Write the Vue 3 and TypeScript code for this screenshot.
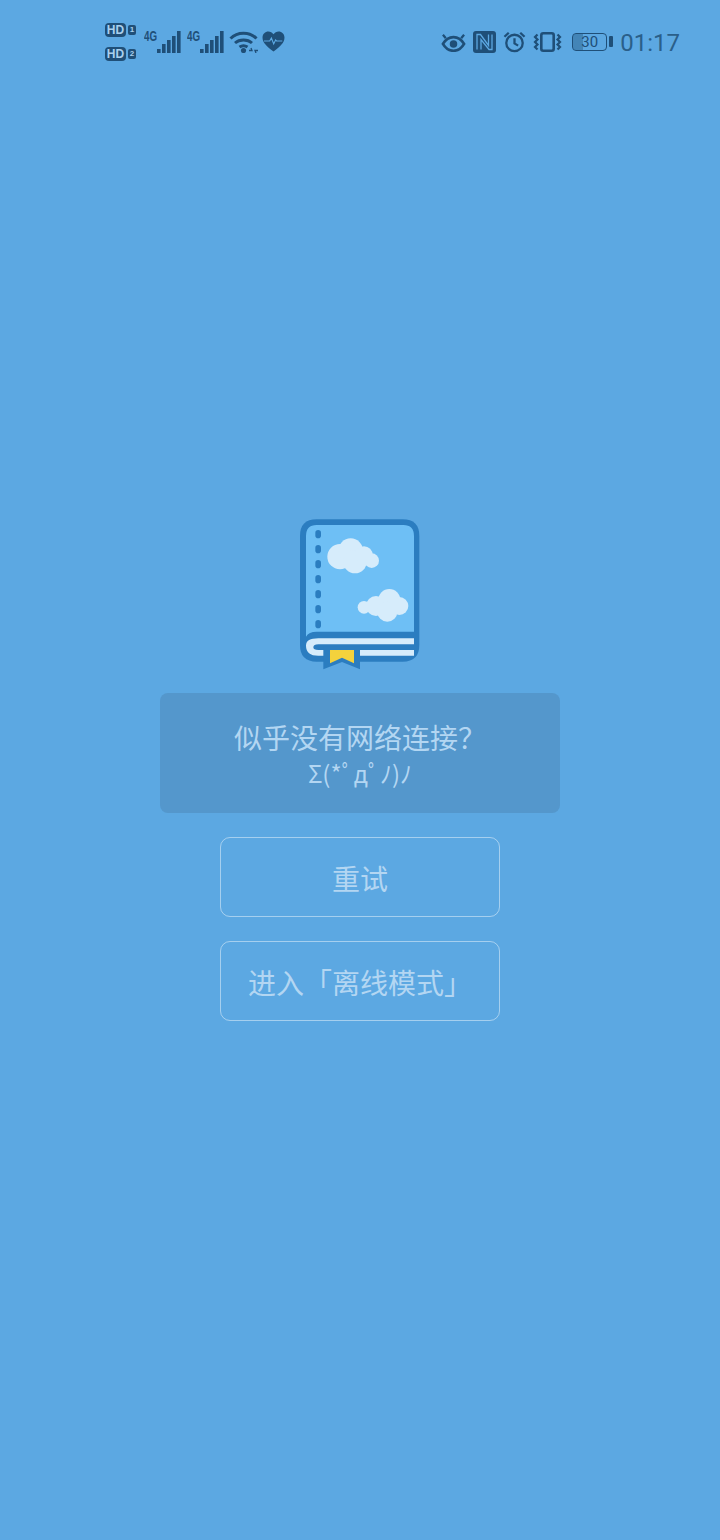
<template>
  <div class="page">
    <header class="status-bar">
      <div class="status-left">
        <div class="hd-stack">
          <div class="hd-row"><span class="hd">HD</span><span class="sim">1</span></div>
          <div class="hd-row"><span class="hd">HD</span><span class="sim">2</span></div>
        </div>
        <div v-for="n in 2" :key="n" class="signal">
          <span class="net">4G</span>
          <svg width="24" height="22" viewBox="0 0 24 22">
            <rect v-for="(h, i) in bars" :key="i" :x="i * 5" :y="22 - h" width="3.6" :height="h" fill="#1f4f78" />
          </svg>
        </div>
        <svg class="wifi" width="29" height="22" viewBox="0 0 29 22" fill="none" stroke="#1f4f78" stroke-width="3">
          <path d="M1.500 7.500C8.500 .5 20.500 .5 27.500 7.500" />
          <path d="M6 12C10.500 8 18.500 8 23 12" />
          <path d="M10.500 16C12.800 14.500 16.200 14.500 18.500 16" />
          <circle cx="14.500" cy="19.500" r="2.600" fill="#1f4f78" stroke="none" />
          <path d="M20 19.500h3l-1-2.500M29 19.500h-3l1 2.500" stroke-width="1.300" />
        </svg>
        <svg class="heart" width="25" height="21" viewBox="0 0 24 22">
          <path d="M12 21.500C5 16 .5 12.500.5 6.800.5 3 3.400.5 6.600.5 8.800.5 10.800 1.600 12 3.500 13.200 1.600 15.200.5 17.400.5 20.600.5 23.500 3 23.500 6.800 23.500 12.500 19 16 12 21.500Z" fill="#1f4f78" />
          <path d="M2 10.500h6l1.800-3 2.400 6 2-4 1 1h6" fill="none" stroke="#5ca8e2" stroke-width="1.200" />
        </svg>
      </div>
      <div class="status-right">
        <svg width="25" height="20" viewBox="0 0 26 20" fill="none" stroke="#1f4f78">
          <path d="M2 12C7.500 2.500 18.500 2.500 24 12 18.500 21.500 7.500 21.500 2 12Z" stroke-width="2.800" />
          <circle cx="13" cy="12" r="3.900" fill="#1f4f78" stroke="none" />
          <path d="M5 6 2 2.500M21 6l3-3.500" stroke-width="2.400" />
        </svg>
        <svg class="nfc" width="23" height="22" viewBox="0 0 23 22">
          <rect width="23" height="22" rx="3" fill="#1f4f78" />
          <path d="M4 18.500V3.500h3.500l8 11V3.500M8 18.500V8.500l8 10h3V3.500" fill="none" stroke="#5ca8e2" stroke-width="1.300" />
        </svg>
        <svg width="23" height="22" viewBox="0 0 24 23" fill="none" stroke="#1f4f78" stroke-width="2.400">
          <circle cx="12" cy="12.500" r="8.600" />
          <path d="M12 7.500v5.500l3.800 2.300M1.500 6 6 1.800M22.500 6 18 1.800" />
        </svg>
        <svg width="29" height="20" viewBox="0 0 29 20" fill="none" stroke="#1f4f78" stroke-width="2.200">
          <rect x="8.300" y="1.300" width="12.400" height="17.400" rx="2" stroke-width="2.600" />
          <path d="M4.500 2.500 2 5 4.500 7.500 2 10 4.500 12.500 2 15 4.500 17.500M24.500 2.500 27 5 24.500 7.500 27 10 24.500 12.500 27 15 24.500 17.500" />
        </svg>
        <div class="battery">
          <div class="battery-body">
            <div class="battery-fill" :style="{ width: level + '%' }"></div>
            <span class="battery-num">{{ level }}</span>
          </div>
          <div class="battery-tip"></div>
        </div>
        <span class="clock">01:17</span>
      </div>
    </header>

    <main class="content">
      <svg class="book" width="140" height="170" viewBox="0 0 420 510">
        <path d="M80 28H338Q388 28 388 78V405Q388 455 338 455H80Q30 455 30 405V78Q30 28 80 28Z" fill="#2b7dc0" />
        <path d="M48 78Q48 45 80 45H340Q372 45 372 78V365H80Q56 365 48 380Z" fill="#6ebff5" />
        <path d="M48 407Q48 385 85 385H372V403H85Q70 403 70 412 70 420 85 420H372V437H85Q48 437 48 407Z" fill="#d6ecfb" />
        <path d="M100 410H210V478L156 456 100 478Z" fill="#2b7dc0" />
        <path d="M120 420H192V460L156 443 120 460Z" fill="#f4d23c" />
        <g fill="#2b7dc0">
          <rect v-for="y in holes" :key="y" x="76" :y="y" width="17" height="25" rx="8.500" />
        </g>
        <g fill="#d6ecfb">
          <circle cx="150" cy="140" r="38" />
          <circle cx="182" cy="122" r="37" />
          <circle cx="195" cy="155" r="35" />
          <circle cx="222" cy="135" r="26" />
          <circle cx="245" cy="152" r="22" />
          <circle cx="222" cy="292" r="19" />
          <circle cx="258" cy="288" r="30" />
          <circle cx="298" cy="270" r="33" />
          <circle cx="292" cy="305" r="30" />
          <circle cx="328" cy="288" r="27" />
        </g>
      </svg>

      <div class="notice">
        <p class="notice-title">似乎没有网络连接？</p>
        <p class="notice-face">Σ(*ﾟдﾟﾉ)ﾉ</p>
      </div>

      <button class="action">重试</button>
      <button class="action">进入「离线模式」</button>
    </main>
  </div>
</template>

<script setup lang="ts">
const bars: number[] = [4, 9, 13, 17, 22]
const holes: number[] = [60, 105, 150, 195, 240, 285, 330]
const level = 30
</script>

<style>
html,
body {
  background: #5ca8e2;
}
</style>

<style scoped>
.page {
  width: 720px;
  height: 1540px;
  background: #5ca8e2;
  display: flex;
  flex-direction: column;
  font-family: "Noto Sans CJK SC", "Noto Sans", sans-serif;
  overflow: hidden;
}

.status-bar {
  height: 84px;
  box-sizing: border-box;
  padding: 21px 40px 0 105px;
  display: flex;
  justify-content: space-between;
  align-items: flex-start;
  color: #1f4f78;
}

.status-left,
.status-right {
  display: flex;
  align-items: center;
  height: 41px;
}

.status-right {
  gap: 7px;
}

.hd-stack {
  width: 39px;
  display: flex;
  flex-direction: column;
  gap: 10px;
}

.hd-row {
  display: flex;
  align-items: center;
  gap: 2px;
}

.hd {
  width: 21px;
  height: 14px;
  background: #1f4f78;
  border-radius: 4px;
  color: #a9d0ee;
  font: 700 12px/14px "Liberation Sans", sans-serif;
  text-align: center;
}

.sim {
  width: 8px;
  height: 10px;
  background: #1f4f78;
  border-radius: 2px;
  color: #a9d0ee;
  font: 700 8px/10px "Liberation Sans", sans-serif;
  text-align: center;
}

.signal {
  width: 43px;
  height: 22px;
  position: relative;
  display: flex;
  justify-content: flex-end;
  padding-right: 6px;
  box-sizing: border-box;
}

.net {
  position: absolute;
  left: 0;
  top: -1px;
  font: 700 14px/12px "Liberation Sans", sans-serif;
  transform: scaleX(0.7);
  transform-origin: left;
}

.wifi {
  margin-left: -1px;
}

.heart {
  margin-left: 3px;
}

.battery {
  display: flex;
  align-items: center;
  gap: 2px;
  margin-left: 3px;
}

.battery-body {
  width: 35px;
  height: 18px;
  box-sizing: border-box;
  border: 1px solid #1f4f78;
  border-radius: 4px;
  position: relative;
  overflow: hidden;
}

.battery-fill {
  height: 100%;
  background: rgba(31, 79, 120, 0.4);
}

.battery-num {
  position: absolute;
  inset: 0;
  text-align: center;
  font: 400 15px/16px "Roboto", sans-serif;
}

.battery-tip {
  width: 4px;
  height: 11px;
  background: #1f4f78;
  border-radius: 1px;
}

.clock {
  font: 400 24px/30px "Roboto", sans-serif;
  color: #2a5f8a;
  padding-top: 2px;
}

.content {
  display: flex;
  flex-direction: column;
  align-items: center;
  padding-top: 426px;
}

.book {
  display: block;
}

.notice {
  width: 400px;
  height: 120px;
  margin-top: 13px;
  background: #5497cc;
  border-radius: 8px;
  color: #b3d6f2;
  text-align: center;
  box-sizing: border-box;
  padding-top: 26px;
}

.notice-title {
  margin: 0;
  font-size: 28px;
  line-height: 36px;
}

.notice-face {
  margin: 0;
  font-size: 24px;
  line-height: 36px;
}

.action {
  width: 280px;
  height: 80px;
  margin-top: 24px;
  padding: 2px 0 0;
  background: transparent;
  border: 1px solid rgba(255, 255, 255, 0.45);
  border-radius: 10px;
  color: #b3d6f2;
  font-family: inherit;
  font-size: 28px;
  line-height: 36px;
}
</style>
